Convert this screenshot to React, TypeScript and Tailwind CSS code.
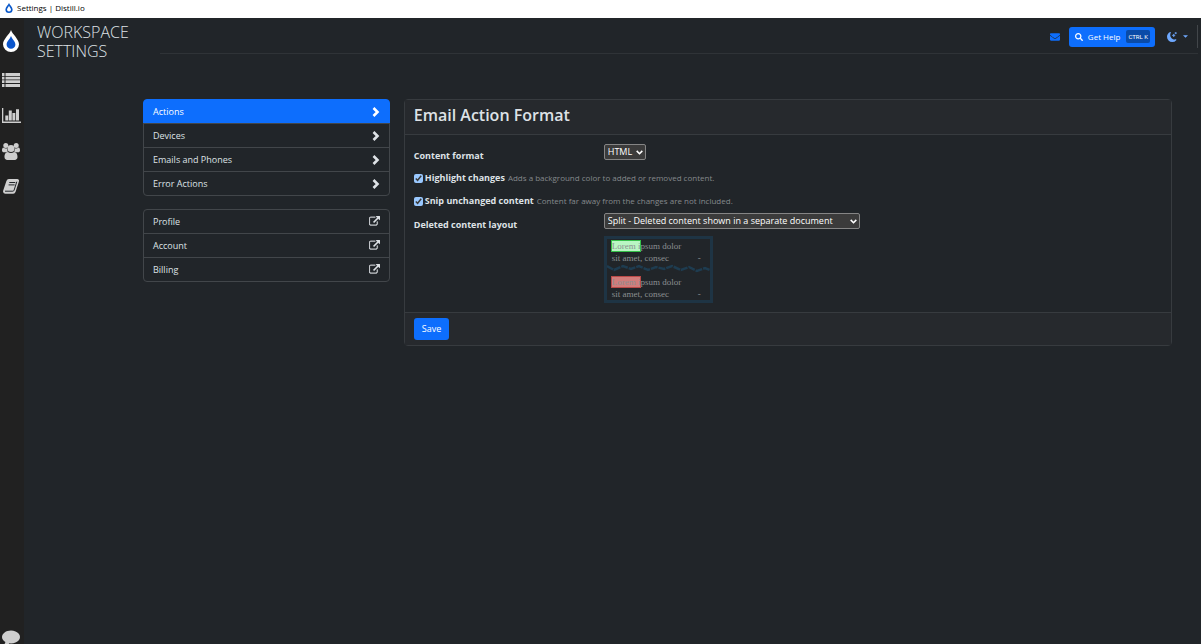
import React from "react";
import { FaSearch, FaEnvelope } from "react-icons/fa";

const actionLinks = ["Actions", "Devices", "Emails and Phones", "Error Actions"];
const accountLinks = ["Profile", "Account", "Billing"];

const Drop = ({ className, outline = false }) => (
  <svg viewBox="0 0 16 22" className={className} aria-hidden="true">
    <path
      d="M8 0C6.500 4.500 0 9 0 14.300a8 7.700 0 0 0 16 0C16 9 9.500 4.500 8 0z"
      fill={outline ? "#fff" : "#0a58ca"}
    />
    <path
      d="M8 6C7 9 3.600 11.500 3.600 14.500a4.400 4.300 0 0 0 8.800 0C12.400 11.500 9 9 8 6z"
      fill={outline ? "#0a55cc" : "#fff"}
    />
  </svg>
);

const ListIcon = () => (
  <svg viewBox="0 0 18 14" className="w-[18px] h-[14px]" fill="currentColor">
    <path d="M0 0h2.500v3H0zM3.500 0H18v3H3.500zM0 3.800h2.500v2.700H0zM3.500 3.800H18v2.700H3.500zM0 7.300h2.500v2.700H0zM3.500 7.300H18v2.700H3.500zM0 10.900h2.500v3H0zM3.500 10.900H18v3H3.500z" />
  </svg>
);

const ChartIcon = () => (
  <svg viewBox="0 0 19 15" className="w-[19px] h-[15px]" fill="currentColor">
    <path d="M0 0h1.300v13.600H19V15H0zM3.300 7.500h2.900v5H3.300zM6.800 2.500h3v10h-3zM10.400 5h2.900v7.500h-2.900zM14 1.200h3v11.300h-3z" />
  </svg>
);

const UsersIcon = () => (
  <svg viewBox="0 0 18 17" className="w-[18px] h-[17px]" fill="currentColor">
    <circle cx="3.800" cy="2.600" r="2.500" />
    <circle cx="14.200" cy="2.600" r="2.500" />
    <path d="M1.500 4.600C.4 4.800 0 6 0 7.400 0 8.600.8 9.200 1.900 9.200h2.300C4.900 8.700 5.600 8.500 6 8.400 5.300 7.500 5 6.500 5.200 5.300c-1.400.6-2.600.2-3.700-.7zM16.500 4.600c1.100.2 1.500 1.400 1.500 2.800 0 1.200-.8 1.800-1.900 1.800h-2.300c-.7-.5-1.400-.7-1.800-.8.700-.9 1-1.900.8-3.100 1.400.6 2.600.2 3.700-.7z" />
    <circle cx="9" cy="5.600" r="3.500" />
    <path d="M5.900 8.900C3.300 9.100 2.500 11.600 2.500 14c0 1.800 1.100 2.900 2.800 2.900h7.400c1.700 0 2.800-1.100 2.800-2.900 0-2.400-.8-4.900-3.400-5.100-2 1.400-4.200 1.400-6.200 0z" />
  </svg>
);

const BookIcon = () => (
  <svg viewBox="0 0 16 15" className="w-4 h-[15px]" fill="currentColor">
    <path d="M5.800 0h8.400q1.100 0 1.500.8.500.7.200 1.700l-3.300 10.300q-.6 1.900-2.400 1.900H2.300Q.5 14.700.1 13 0 12 .3 11.300L3.400 1.900Q4.100 0 5.800 0z" />
    <path
      d="M6.300 3.500h6M5.600 5.900h6M2 12.200h7.900q.9 0 1.200-1L13.800 2.700"
      fill="none"
      stroke="#212529"
      strokeWidth="1"
    />
  </svg>
);

const CommentIcon = () => (
  <svg viewBox="0 0 1792 1792" className="w-[18px] h-[18px]" fill="currentColor">
    <path d="M1792 896q0 174-120 321.500t-326 233-450 85.500q-70 0-145-8-198 175-460 242-49 14-114 22-17 2-30.500-9t-17.500-29v-1q-3-4-.5-12t2-10 4.500-9.500l6-9 7-8.500 8-9q7-8 31-34.500t34.500-38 31-39.500 32.500-51 27-59 26-76q-157-89-247.500-220t-90.500-281q0-130 71-248.500t191-204.500 286-136.500 348-50.500q244 0 450 85.500t326 233 120 321.500z" />
  </svg>
);

const ExternalLinkIcon = () => (
  <svg viewBox="0 0 1792 1792" className="w-[11px] h-[11px]" fill="currentColor" stroke="currentColor" strokeWidth="50">
    <path d="M1408 928v320q0 119-84.500 203.500t-203.500 84.500h-832q-119 0-203.500-84.500t-84.500-203.500v-832q0-119 84.500-203.500t203.500-84.500h704q14 0 23 9t9 23v64q0 14-9 23t-23 9h-704q-66 0-113 47t-47 113v832q0 66 47 113t113 47h832q66 0 113-47t47-113v-320q0-14 9-23t23-9h64q14 0 23 9t9 23zm384-864v512q0 26-19 45t-45 19-45-19l-176-176-652 652q-10 10-23 10t-23-10l-114-114q-10-10-10-23t10-23l652-652-176-176q-19-19-19-45t19-45 45-19h512q26 0 45 19t19 45z" />
  </svg>
);

const ChevronIcon = () => (
  <svg viewBox="0 0 8 10" className="w-2 h-[10px]" fill="none" stroke="currentColor" strokeWidth="2.600">
    <path d="M1.500 1l4 4-4 4" />
  </svg>
);

const MoonIcon = () => (
  <svg viewBox="0 0 16 16" className="w-[10px] h-[10px]" fill="currentColor">
    <path d="M6 .3a.8.8 0 0 1 .1.800 7.200 7.200 0 0 0-.9 3.500c0 4 3.300 7.300 7.300 7.300.5 0 1-.1 1.500-.2a.8.800 0 0 1 .8 1.300A8.300 8.300 0 0 1 8.300 16 8.300 8.300 0 0 1 0 7.700C0 4.300 2 1.400 5 .1a.8.800 0 0 1 1 .2z" />
    <path d="M10.800 3.100l.6 1.700 1.700.6-1.700.7-.6 1.700-.7-1.700-1.700-.7 1.700-.6zM13.900.2l.4 1.100 1.200.4-1.200.5-.4 1.100-.4-1.100-1.200-.5 1.200-.4z" stroke="currentColor" strokeWidth=".8" />
  </svg>
);

const NavList = ({ items, active, icon }) => (
  <ul className="pt-px">
    {items.map((item) => (
      <li key={item} className="group -mt-px">
        <a
          href="#"
          className={
            "flex h-[25px] items-center justify-between border px-[9px] text-[9px] group-first:rounded-t group-last:rounded-b " +
            (item === active
              ? "border-[#0d6efd] bg-[#0d6efd] text-white"
              : "border-[#42464a] text-[#dee2e6]")
          }
        >
          {item}
          {icon}
        </a>
      </li>
    ))}
  </ul>
);

const Select = ({ id, option, className }) => (
  <div className={"relative " + className}>
    <select
      id={id}
      className="block h-4 w-full appearance-none rounded-[2px] border border-[#858585] bg-[#3b3b3b] pl-[3px] text-[9px] leading-[14px] text-white"
    >
      <option>{option}</option>
    </select>
    <svg
      viewBox="0 0 8 5"
      className="pointer-events-none absolute right-[3px] top-[6px] h-[5px] w-[7px]"
      fill="none"
      stroke="#fff"
      strokeWidth="1.800"
    >
      <path d="M.8.700L4 3.900 7.200.700" />
    </svg>
  </div>
);

const Check = ({ id, label, hint }) => (
  <div className="flex h-[23px] items-center pb-px">
    <input id={id} type="checkbox" defaultChecked className="mr-[2px] h-[9px] w-[9px]" />
    <label htmlFor={id} className="text-[9px] font-bold">
      {label}
    </label>
    <small className="ml-[3px] text-[8px] text-[#85898c]">{hint}</small>
  </div>
);

const Sample = ({ highlight }) => (
  <p className="px-[5px] pt-px font-['Liberation_Serif',serif] text-[9px] leading-3 text-[#8b8f92]">
    <span className={"-ml-px py-px pl-px outline -outline-offset-1 " + highlight}>Lorem i</span>
    psum dolor
    <span className="flex justify-between pr-1">
      <span>sit amet, consec</span>
      <span>-</span>
    </span>
  </p>
);

const Preview = () => (
  <div className="mt-[7px] w-[109px] border-[3px] border-[#1e3444]">
    <Sample highlight="bg-[#b9f6c3] outline-[#35c04a]" />
    <svg viewBox="0 0 103 11" className="block h-[11px] w-full" fill="none" stroke="#1e3c50" strokeWidth="2.500" strokeDasharray="7 1">
      <path d="M0 2l7 4 9-4 8 3 8-3 9 4 8-3 8 2 8-3 9 4 8-3 8 4 8-3 5 2" />
    </svg>
    <Sample highlight="bg-[#d17c7a] outline-[#b94a48]" />
  </div>
);

const App = () => {
  return (
    <div className="flex min-h-screen flex-col bg-[#212529] font-['Open_Sans','Noto_Sans',sans-serif] text-[#dee2e6] [color-scheme:dark]">
      <div className="flex h-[18px] items-center gap-1 bg-white px-[5px] pb-[2px] text-[8px] text-black">
        <Drop className="h-[10px] w-2" />
        Settings | Distill.io
      </div>
      <div className="flex flex-1">
        <nav className="flex w-6 flex-col items-start bg-[#212121] pl-[2px] text-[#cfcfcf]">
          <a href="#" aria-label="Home" className="ml-px mt-3">
            <Drop outline className="h-[22px] w-4" />
          </a>
          <a href="#" aria-label="Watchlist" className="mt-[21px]"><ListIcon /></a>
          <a href="#" aria-label="Reports" className="mt-[21px]"><ChartIcon /></a>
          <a href="#" aria-label="Team" className="mt-5"><UsersIcon /></a>
          <a href="#" aria-label="Docs" className="ml-px mt-[19px]"><BookIcon /></a>
          <a href="#" aria-label="Chat" className="-mb-[2px] mt-auto"><CommentIcon /></a>
        </nav>

        <div className="flex-1">
          <header className="flex pl-[13px] pr-[3px]">
            <h1 className="w-[123px] pt-[5px] text-[16px] font-light leading-[19px]">
              WORKSPACE
              <br />
              SETTINGS
            </h1>
            <div className="flex h-9 flex-1 items-center justify-end border-b border-[#2f3337] pt-[2px]">
              <a href="#" aria-label="Messages" className="mr-[9px] text-[#0d6efd]">
                <FaEnvelope size={10} />
              </a>
              <button className="flex h-5 items-center rounded-[3px] bg-[#0d6efd] pl-[6px] pr-[5px] text-[8px] text-white">
                <FaSearch size={8} />
                <span className="ml-[5px]">Get Help</span>
                <kbd className="ml-[6px] flex h-[13px] items-center rounded-[2px] bg-[#0a4ba8] px-[2px] font-['Roboto',sans-serif] text-[6px]">
                  CTRL K
                </kbd>
              </button>
              <button aria-label="Theme" className="ml-3 mr-[9px] flex items-center gap-[6px] text-[#6ea8fe]">
                <MoonIcon />
                <svg viewBox="0 0 6 3" className="h-[3px] w-[5px]" fill="currentColor">
                  <path d="M0 0h6L3 3z" />
                </svg>
              </button>
              <span className="h-[23px] w-px bg-[#42464a]" />
            </div>
          </header>

          <main className="ml-[119px] mr-[29px] mt-[38px] grid grid-cols-4 items-start gap-[14px]">
            <aside className="flex flex-col gap-[13px]">
              <NavList items={actionLinks} active="Actions" icon={<ChevronIcon />} />
              <NavList items={accountLinks} active="" icon={<ExternalLinkIcon />} />
            </aside>

            <form className="col-span-3 rounded border border-[#373b3f]">
              <h2 className="border-b border-[#373b3f] bg-[#26292d] px-[9px] pb-[7px] pt-[3px] text-[16px] font-semibold leading-6">
                Email Action Format
              </h2>
              <div className="px-[9px] py-[9px]">
                <div className="flex h-[23px] items-start">
                  <label htmlFor="format" className="w-[190px] pt-1 text-[9px] font-bold leading-4">
                    Content format
                  </label>
                  <Select id="format" option="HTML" className="w-[42px]" />
                </div>
                <Check
                  id="highlight"
                  label="Highlight changes"
                  hint="Adds a background color to added or removed content."
                />
                <Check
                  id="snip"
                  label="Snip unchanged content"
                  hint="Content far away from the changes are not included."
                />
                <div className="flex items-start">
                  <label htmlFor="layout" className="w-[190px] pt-1 text-[9px] font-bold leading-4">
                    Deleted content layout
                  </label>
                  <div>
                    <Select
                      id="layout"
                      option="Split - Deleted content shown in a separate document"
                      className="w-[256px]"
                    />
                    <Preview />
                  </div>
                </div>
              </div>
              <div className="border-t border-[#373b3f] bg-[#26292d] px-[9px] py-[5px]">
                <button type="button" className="block h-[22px] rounded-[3px] bg-[#0d6efd] px-2 text-[9px] text-white">
                  Save
                </button>
              </div>
            </form>
          </main>
        </div>
      </div>
    </div>
  );
};

export default App;
